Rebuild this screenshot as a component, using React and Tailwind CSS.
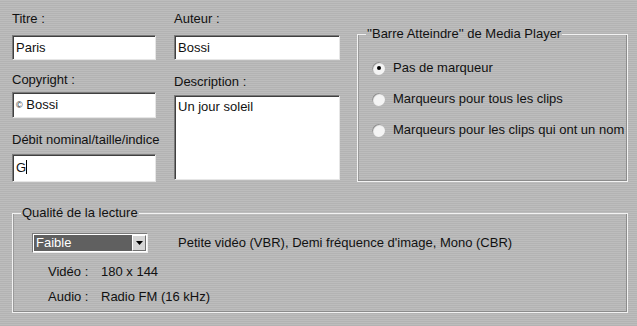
import React from "react";

const font = { fontFamily: '"Liberation Sans", Arial, sans-serif' };

function Input({ children, className = "" }) {
  return (
    <div
      className={`bg-white border border-t-[#7a7a7a] border-l-[#7a7a7a] border-b-[#e6e6e6] border-r-[#e6e6e6] shadow-[inset_1px_1px_0_#404040] px-[3px] text-[13px] leading-[16px] text-[#111] ${className}`}
    >
      {children}
    </div>
  );
}

function Radio({ checked, label }) {
  return (
    <div className="flex items-center gap-[8px] h-[16px]">
      <div className="w-[13px] h-[13px] rounded-full bg-[#f4f4f4] shadow-[inset_1px_1px_1px_#8a8a8a] flex items-center justify-center">
        {checked && <div className="w-[4px] h-[4px] rounded-full bg-black" />}
      </div>
      <span>{label}</span>
    </div>
  );
}

export default function App() {
  return (
    <div
      style={font}
      className="w-[637px] h-[326px] overflow-hidden text-[13px] leading-[16px] text-[#111] bg-[repeating-linear-gradient(to_bottom,#bdbdbd_0px,#bdbdbd_1px,#b3b3b3_1px,#b3b3b3_2px)] pl-[12px] pt-[11px]"
    >
      <div className="flex">
        {/* column 1 */}
        <div className="w-[144px] flex flex-col">
          <div className="h-[16px]">Titre :</div>
          <Input className="mt-[8px] h-[25px] pt-[4px]">Paris</Input>
          <div className="h-[16px] mt-[12px]">Copyright :</div>
          <Input className="mt-[4px] h-[26px] pt-[4px]">
            <span className="text-[9px] align-top">©</span> Bossi
          </Input>
          <div className="h-[16px] mt-[14px] whitespace-nowrap">Débit nominal/taille/indice</div>
          <Input className="mt-[6px] h-[28px] pt-[5px]">
            G<span className="inline-block w-[1px] h-[14px] bg-black align-[-2px]" />
          </Input>
        </div>
        {/* column 2 */}
        <div className="w-[166px] ml-[18px] flex flex-col">
          <div className="h-[16px]">Auteur :</div>
          <Input className="mt-[8px] h-[25px] pt-[4px]">Bossi</Input>
          <div className="h-[16px] mt-[14px]">Description :</div>
          <Input className="mt-[5px] h-[85px] pt-[3px]">Un jour soleil</Input>
        </div>
        {/* group */}
        <fieldset className="ml-[17px] mt-[15px] w-[271px] h-[156px] border border-[#f2f2f2] shadow-[inset_-1px_-1px_0_#8c8c8c,inset_1px_0_0_#9a9a9a] pl-[8px]">
          <legend className="px-[1px]">''Barre Atteindre'' de Media Player</legend>
          <div className="flex flex-col gap-[15px] pl-[6px] pt-[18px]">
            <Radio checked label="Pas de marqueur" />
            <Radio label="Marqueurs pour tous les clips" />
            <Radio label="Marqueurs pour les clips qui ont un nom" />
          </div>
        </fieldset>
      </div>

      <fieldset className="mt-[23px] w-[616px] h-[108px] border border-[#f2f2f2] shadow-[inset_-1px_-1px_0_#8c8c8c,inset_1px_0_0_#9a9a9a] pl-[8px]">
        <legend className="px-[1px]">Qualité de la lecture</legend>
        <div className="pl-[11px] pt-[12px]">
          <div className="flex items-center">
            <div className="w-[116px] h-[20px] bg-white border border-t-[#7a7a7a] border-l-[#7a7a7a] border-b-[#eeeeee] border-r-[#eeeeee] flex p-[1px]">
              <div className="flex-1 bg-[#606060] text-white pl-[2px] leading-[16px]">Faible</div>
              <div className="w-[14px] bg-[#d6d6d6] border border-t-white border-l-white border-b-[#707070] border-r-[#707070] flex items-center justify-center">
                <svg width="7" height="4" viewBox="0 0 7 4">
                  <path d="M0 0H7L3.5 4Z" fill="#000" />
                </svg>
              </div>
            </div>
            <span className="ml-[30px]">Petite vidéo (VBR), Demi fréquence d'image, Mono (CBR)</span>
          </div>
          <div className="flex flex-col gap-[9px] mt-[11px] pl-[16px]">
            <div className="flex">
              <span className="w-[53px]">Vidéo :</span>
              <span>180 x 144</span>
            </div>
            <div className="flex">
              <span className="w-[53px]">Audio :</span>
              <span>Radio FM (16 kHz)</span>
            </div>
          </div>
        </div>
      </fieldset>
    </div>
  );
}
